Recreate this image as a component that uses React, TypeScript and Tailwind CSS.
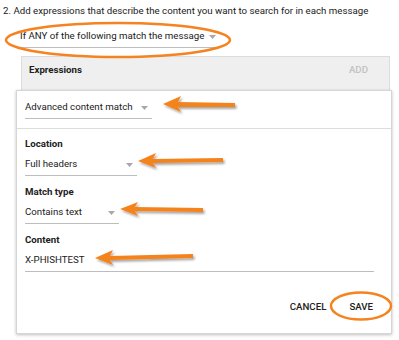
import React from "react";

const Caret = () => (
  <svg width="7" height="4" viewBox="0 0 7 4" className="shrink-0">
    <path d="M0 0 L7 0 L3.5 4 Z" fill="#a8a8a8" />
  </svg>
);

function Select({ label, width }: { label: string; width: string }) {
  return (
    <div className={`flex items-center justify-between border-b border-[#bdbdbd] h-[22px] pr-[4px] whitespace-nowrap ${width}`}>
      <span>{label}</span>
      <Caret />
    </div>
  );
}

function Annotations() {
  return (
    <svg className="absolute inset-0 pointer-events-none" width="399" height="340">
      <defs>
        <filter id="sh" x="-20%" y="-50%" width="140%" height="200%">
          <feDropShadow dx="1.5" dy="2" stdDeviation="1.2" floodColor="#000" floodOpacity="0.35" />
        </filter>
      </defs>
      <ellipse cx="118" cy="40" rx="112" ry="17" fill="none" stroke="#f5831f" strokeWidth="2.5" />
      <ellipse cx="361" cy="306" rx="30" ry="13.5" fill="none" stroke="#f5831f" strokeWidth="2.5" />
      <g fill="#f5831f" filter="url(#sh)">
        <path d="M163 104 L181 96 L178 102 L235 103 L235 107 L178 107 L181 112 Z" />
        <path d="M138 161 L156 153 L153 159 L223 158 L223 162 L153 163 L156 168 Z" />
        <path d="M120 209 L138 202 L135 207 L203 208 L203 212 L135 211 L138 216 Z" />
        <path d="M95 258 L113 250 L110 256 L193 254 L193 258 L110 260 L113 265 Z" />
      </g>
    </svg>
  );
}

export default function App() {
  return (
    <div className="relative w-[399px] h-[340px] bg-white overflow-hidden text-[#212121] font-['Roboto',sans-serif] text-[9.7px]">
      <div className="pt-[4px] pl-[3px] leading-[14px] text-[#212121] whitespace-nowrap">
        2. Add expressions that describe the content you want to search for in each message
      </div>

      <div className="ml-[20px] mt-[8px] w-[200px]">
        <Select label="If ANY of the following match the message" width="w-[200px]" />
      </div>

      <div className="ml-[21px] mt-[8px] w-[369px] h-[34px] bg-[#efefef] border border-[#dcdcdc] border-b-0 flex items-start justify-between px-[7px] pt-[7px] leading-[12px]">
        <span className="font-bold">Expressions</span>
        <span className="text-[#c2c2c2] font-medium mr-[14px]">ADD</span>
      </div>

      <div className="ml-[16px] w-[376px] h-[244px] bg-white border border-[#d6d6d6] shadow-[0_1px_3px_rgba(0,0,0,0.25)] flex flex-col">
        <div className="px-[8px] pt-[6px] h-[38px] border-b border-[#dcdcdc]">
          <Select label="Advanced content match" width="w-[127px]" />
        </div>

        <div className="px-[8px] pt-[9px] flex flex-col">
          <span className="font-bold leading-[12px]">Location</span>
          <Select label="Full headers" width="w-[112px] mt-[4px]" />
          <span className="font-bold leading-[12px] mt-[10px]">Match type</span>
          <Select label="Contains text" width="w-[94px] mt-[4px]" />
          <span className="font-bold leading-[12px] mt-[10px]">Content</span>
          <div className="border-b border-[#bdbdbd] h-[23px] mt-[3px] w-[349px] flex items-center">X-PHISHTEST</div>
        </div>

        <div className="flex justify-end items-center gap-[23px] pr-[18px] mt-[28px] font-medium">
          <span>CANCEL</span>
          <span>SAVE</span>
        </div>
      </div>

      <Annotations />
    </div>
  );
}
